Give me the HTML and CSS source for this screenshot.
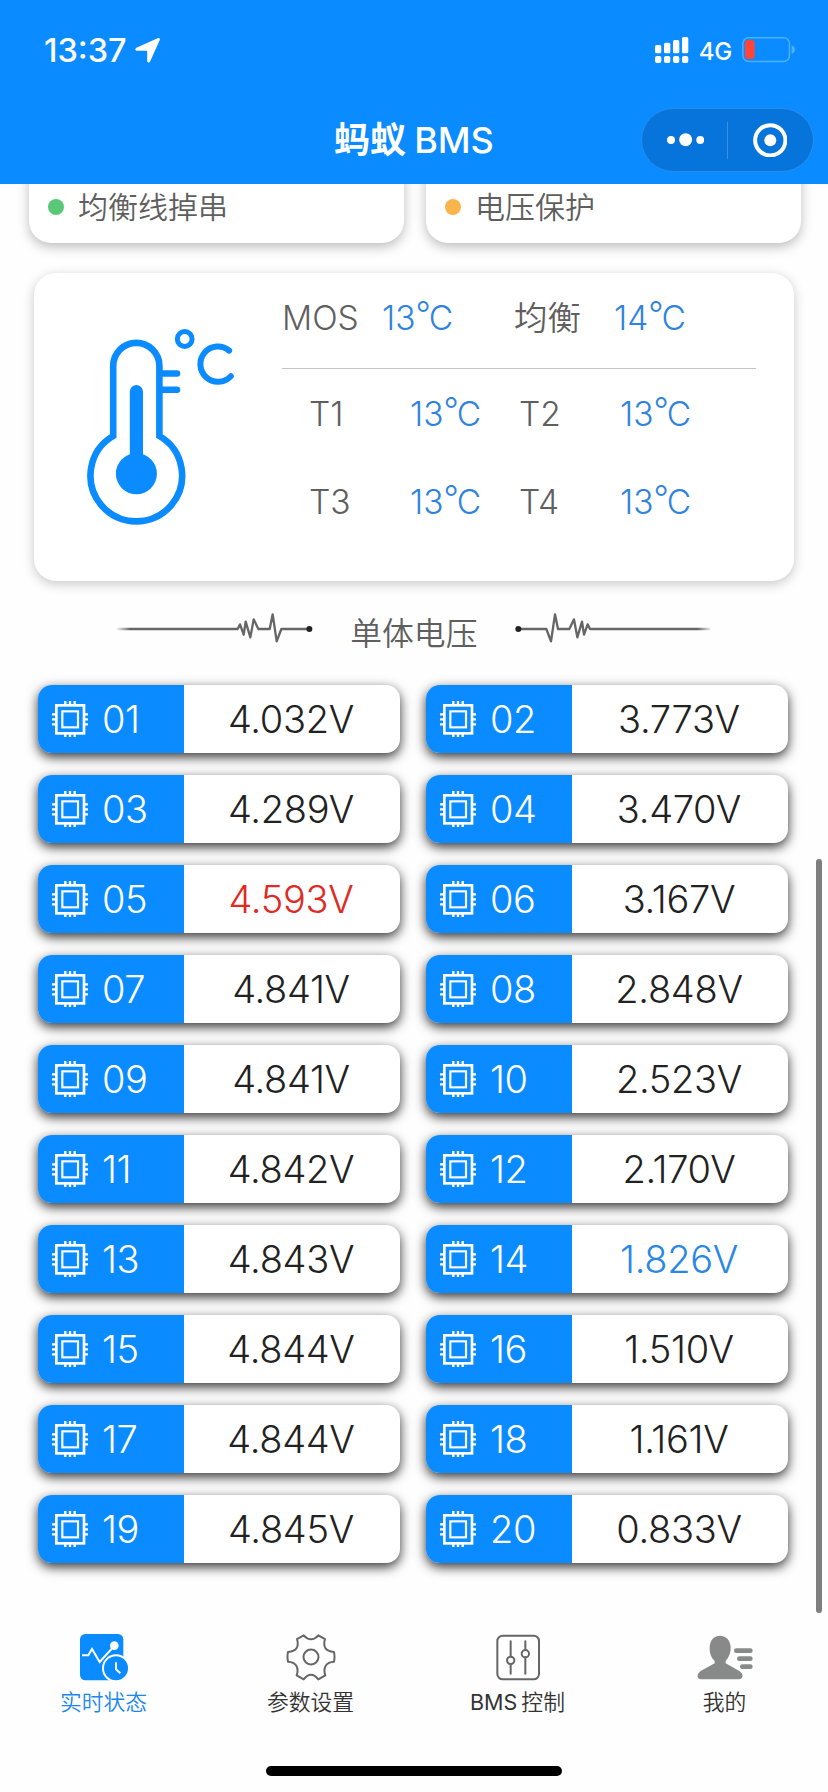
FILE: index.html
```html
<!DOCTYPE html>
<html lang="zh-CN">
<head>
<meta charset="utf-8">
<title>蚂蚁 BMS</title>
<link rel="stylesheet" href="styles.css">
</head>
<body>
<svg class="defs" width="0" height="0">
  <defs>
    <symbol id="chip" viewBox="0 0 108 110">
      <g fill="none" stroke="#fff">
        <rect x="13" y="13" width="83" height="84" stroke-width="8"/>
        <rect x="31" y="31" width="47" height="48" stroke-width="6.5"/>
        <path stroke-width="7" d="M40 0v12M54 0v12M68 0v12M40 98v12M54 98v12M68 98v12M0 40h12M0 55h12M0 70h12M96 40h12M96 55h12M96 70h12"/>
      </g>
    </symbol>
    <linearGradient id="fade" gradientUnits="userSpaceOnUse" x1="50" y1="0" x2="90" y2="0">
      <stop offset="0" stop-color="#666" stop-opacity="0.1"/>
      <stop offset="1" stop-color="#666"/>
    </linearGradient>
    <symbol id="pulse" viewBox="50 60 590 104">
      <path fill="none" stroke="url(#fade)" stroke-width="7" stroke-linejoin="round" d="M50 117H412L419 103L430 134L436 95L450 142L460 88L474 117H508L517 73L529 154L543 117H627"/>
      <circle cx="627" cy="117" r="9" fill="#222"/>
    </symbol>
  </defs>
</svg>

<header class="header">
  <div class="status">
    <span class="time">13:37</span>
    <svg class="location" viewBox="0 0 74 74"><path fill="#fff" d="M67 1Q75-2 73 7L45 69Q41 77 36 69V38H5Q-3 35 4 29Z"/></svg>
    <svg class="signal" viewBox="0 0 100 78" fill="#fff">
      <rect x="0" y="24" width="19" height="25" rx="5"/><rect x="27" y="17" width="19" height="32" rx="5"/><rect x="54" y="9" width="19" height="40" rx="5"/><rect x="81" y="0" width="19" height="49" rx="5"/>
      <rect x="0" y="57" width="19" height="21" rx="6"/><rect x="27" y="57" width="19" height="21" rx="6"/><rect x="54" y="57" width="19" height="21" rx="6"/><rect x="81" y="57" width="19" height="21" rx="6"/>
    </svg>
    <span class="network">4G</span>
    <svg class="battery" viewBox="0 0 160 76">
      <rect x="2.5" y="2.5" width="140" height="71" rx="17" fill="none" stroke="#4fb0ff" stroke-width="4.5"/>
      <rect x="9" y="9" width="29" height="57" rx="9" fill="#ff453a"/>
      <path d="M149 25Q159 29 159 38Q159 47 149 51Z" fill="#4fb0ff"/>
    </svg>
  </div>
  <div class="navbar">
    <h1 class="title">蚂蚁<span class="title-latin">BMS</span></h1>
    <div class="capsule">
      <svg class="more" viewBox="0 0 112 40" fill="#fff"><circle cx="12" cy="21" r="12"/><circle cx="56" cy="20" r="19.5"/><circle cx="100" cy="21" r="12"/></svg>
      <i class="capsule-line"></i>
      <svg class="target" viewBox="0 0 104 104"><circle cx="52" cy="52" r="45.5" fill="none" stroke="#fff" stroke-width="12"/><circle cx="52" cy="52" r="18" fill="#fff"/></svg>
    </div>
  </div>
</header>

<main class="content">
  <section class="alerts">
    <div class="alert"><i class="dot green"></i>均衡线掉串</div>
    <div class="alert"><i class="dot orange"></i>电压保护</div>
  </section>

  <section class="temperature">
    <svg class="thermometer" viewBox="84 325 154 202">
      <g fill="none" stroke="#0a8bff" stroke-width="6.6">
        <path d="M113.2 436V366A23.1 23.1 0 0 1 159.4 366V436A45.8 45.8 0 1 1 113.2 436Z"/>
        <path stroke-linecap="round" d="M162 373.5H177M162 389.8H177"/>
        <path stroke-width="6" stroke-linecap="round" d="M229.2 350.6A17.6 17.6 0 1 0 230.8 376.2"/>
        <circle cx="184.7" cy="339" r="7.4" stroke-width="5"/>
        <path stroke-width="13.2" stroke-linecap="round" d="M136.4 391.7V474"/>
      </g>
      <circle cx="136.4" cy="473.7" r="20.5" fill="#0a8bff"/>
    </svg>
    <div class="readings">
      <div class="row main-row"><span class="label">MOS</span><span class="value">13<i class="deg">°</i>C</span><span class="label cjk">均衡</span><span class="value">14<i class="deg">°</i>C</span></div>
      <div class="row probe-row"><span class="label">T1</span><span class="value">13<i class="deg">°</i>C</span><span class="label">T2</span><span class="value">13<i class="deg">°</i>C</span></div>
      <div class="row probe-row"><span class="label">T3</span><span class="value">13<i class="deg">°</i>C</span><span class="label">T4</span><span class="value">13<i class="deg">°</i>C</span></div>
    </div>
  </section>

  <div class="section-title">
    <svg class="pulse"><use href="#pulse"/></svg>
    <h2 class="section-name">单体电压</h2>
    <svg class="pulse mirrored"><use href="#pulse"/></svg>
  </div>

  <section class="cells">
    <div class="cell"><div class="tag"><svg class="chip"><use href="#chip"/></svg>01</div><div class="volt">4.032V</div></div>
    <div class="cell"><div class="tag"><svg class="chip"><use href="#chip"/></svg>02</div><div class="volt">3.773V</div></div>
    <div class="cell"><div class="tag"><svg class="chip"><use href="#chip"/></svg>03</div><div class="volt">4.289V</div></div>
    <div class="cell"><div class="tag"><svg class="chip"><use href="#chip"/></svg>04</div><div class="volt">3.470V</div></div>
    <div class="cell"><div class="tag"><svg class="chip"><use href="#chip"/></svg>05</div><div class="volt high">4.593V</div></div>
    <div class="cell"><div class="tag"><svg class="chip"><use href="#chip"/></svg>06</div><div class="volt">3.167V</div></div>
    <div class="cell"><div class="tag"><svg class="chip"><use href="#chip"/></svg>07</div><div class="volt">4.841V</div></div>
    <div class="cell"><div class="tag"><svg class="chip"><use href="#chip"/></svg>08</div><div class="volt">2.848V</div></div>
    <div class="cell"><div class="tag"><svg class="chip"><use href="#chip"/></svg>09</div><div class="volt">4.841V</div></div>
    <div class="cell"><div class="tag"><svg class="chip"><use href="#chip"/></svg>10</div><div class="volt">2.523V</div></div>
    <div class="cell"><div class="tag"><svg class="chip"><use href="#chip"/></svg>11</div><div class="volt">4.842V</div></div>
    <div class="cell"><div class="tag"><svg class="chip"><use href="#chip"/></svg>12</div><div class="volt">2.170V</div></div>
    <div class="cell"><div class="tag"><svg class="chip"><use href="#chip"/></svg>13</div><div class="volt">4.843V</div></div>
    <div class="cell"><div class="tag"><svg class="chip"><use href="#chip"/></svg>14</div><div class="volt low">1.826V</div></div>
    <div class="cell"><div class="tag"><svg class="chip"><use href="#chip"/></svg>15</div><div class="volt">4.844V</div></div>
    <div class="cell"><div class="tag"><svg class="chip"><use href="#chip"/></svg>16</div><div class="volt">1.510V</div></div>
    <div class="cell"><div class="tag"><svg class="chip"><use href="#chip"/></svg>17</div><div class="volt">4.844V</div></div>
    <div class="cell"><div class="tag"><svg class="chip"><use href="#chip"/></svg>18</div><div class="volt">1.161V</div></div>
    <div class="cell"><div class="tag"><svg class="chip"><use href="#chip"/></svg>19</div><div class="volt">4.845V</div></div>
    <div class="cell"><div class="tag"><svg class="chip"><use href="#chip"/></svg>20</div><div class="volt">0.833V</div></div>
  </section>
</main>

<nav class="tabs">
  <a class="tab active">
    <svg class="tab-icon" viewBox="0 0 150 140">
      <rect x="3" y="0" width="130" height="139" rx="16" fill="#0a8bff"/>
      <path d="M9 64H28L39 45L62 84L104 38" fill="none" stroke="#fff" stroke-width="6"/>
      <circle cx="106" cy="35" r="13" fill="#fff"/>
      <circle cx="111" cy="103" r="42" fill="#fff"/>
      <circle cx="111" cy="103" r="36" fill="#0a8bff"/>
      <path d="M111 85V106L124 118" fill="none" stroke="#fff" stroke-width="6"/>
    </svg>
    <span>实时状态</span>
  </a>
  <a class="tab">
    <svg class="tab-icon" viewBox="0 0 150 140">
      <g fill="none" stroke="#666" stroke-width="6" stroke-linejoin="round">
        <path d="M53 4Q64 16 75 16Q86 16 97 4L117 15Q112 32 118 42Q124 52 144 54Q147 69 144 83Q126 84 119 95Q112 107 118 124L97 136Q86 122 75 122Q64 122 53 136L32 124Q38 107 31 95Q24 84 6 83Q3 69 6 54Q26 52 32 42Q38 32 33 15Z"/>
        <circle cx="75" cy="69" r="22.5"/>
      </g>
    </svg>
    <span>参数设置</span>
  </a>
  <a class="tab">
    <svg class="tab-icon" viewBox="0 0 150 140">
      <g fill="none" stroke="#666" stroke-width="6" stroke-linecap="round">
        <rect x="13" y="5" width="125" height="131" rx="16"/>
        <path d="M53 22V67M53 90V119M97 22V47M97 70V119"/>
        <circle cx="53" cy="79" r="11"/><circle cx="97" cy="59" r="11"/>
      </g>
    </svg>
    <span><b class="tab-latin">BMS</b>控制</span>
  </a>
  <a class="tab">
    <svg class="tab-icon wide" viewBox="0 0 168 140">
      <g fill="#888a89">
        <path d="M69 5C88 5 102 21 101 44C100 62 92 75 86 80V88L127 111Q139 119 136 129Q134 136 126 136H12Q4 136 2 129Q0 119 11 111L53 88V80C46 75 38 62 38 44C37 21 50 5 69 5Z"/>
        <rect x="111" y="43" width="56" height="14" rx="7"/><rect x="120" y="67" width="47" height="14" rx="7"/><rect x="129" y="91" width="38" height="14" rx="7"/>
      </g>
    </svg>
    <span>我的</span>
  </a>
</nav>
<div class="home-bar"></div>
<div class="scroll-thumb"></div>
</body>
</html>
```
FILE: styles.css
```css
* { box-sizing: border-box; }

body {
  position: relative;
  width: 828px;
  height: 1792px;
  margin: 0;
  overflow: hidden;
  display: flex;
  flex-direction: column;
  background: #fefefe;
  color: #5f5f5f;
  font-family: Inter, "Noto Sans CJK SC", sans-serif;
  font-weight: 300;
}
svg { display: block; flex: none; }
.defs { position: absolute; }

.header { flex: none; height: 184px; background: #0a8bff; color: #fff; }
.status { display: flex; align-items: center; height: 100px; padding: 0 33px 0 44px; }
.time { width: 91px; font-size: 32.5px; font-weight: 550; }
.location { width: 25px; height: 25px; }
.signal { width: 33.3px; height: 26px; margin-left: auto; }
.network { width: 53px; padding: 2px 0 0 10px; font-size: 24px; font-weight: 450; letter-spacing: -0.3px; }
.battery { width: 53.3px; height: 25.3px; }

.navbar { display: grid; grid-template-columns: 1fr auto 1fr; align-items: center; height: 80px; padding-right: 14.5px; }
.title { grid-column: 2; margin: 0; padding-left: 14.5px; display: flex; align-items: center; font-size: 36px; line-height: 50px; font-weight: 600; }
.title-latin { margin-left: 8px; font-weight: 550; }
.capsule {
  justify-self: end;
  display: flex;
  align-items: center;
  width: 173px;
  height: 64px;
  padding-left: 25px;
  border: 1px solid #278fec;
  border-radius: 32px;
  background: #0674da;
}
.more { width: 37.3px; height: 13.3px; }
.capsule-line { width: 1px; height: 37px; margin: 0 25px 0 23px; background: #3a91e3; }
.target { width: 34.6px; height: 34.6px; }

.content { flex: none; height: 1416px; overflow: hidden; }
.alerts { display: flex; gap: 22px; margin-top: -40px; padding-left: 29px; }
.alert {
  display: flex;
  align-items: center;
  width: 375px;
  height: 99px;
  padding: 22px 0 0 19px;
  border-radius: 22px;
  background: #fff;
  box-shadow: 0 4px 12px rgba(0, 0, 0, 0.26);
  font-size: 30px;
  font-weight: 350;
}
.dot { width: 16px; height: 16px; margin: 4px 14px 0 0; border-radius: 50%; }
.green { background: #5ac878; }
.orange { background: #f9b54c; }

.temperature {
  display: flex;
  width: 760px;
  height: 308px;
  margin: 30px 0 0 34px;
  padding-left: 50px;
  border-radius: 22px;
  background: #fff;
  box-shadow: 0 3px 12px rgba(0, 0, 0, 0.22);
}
.thermometer { width: 154px; height: 202px; margin-top: 52px; }
.readings { width: 474px; margin-left: 44px; font-size: 33.5px; line-height: 40px; }
.row { display: grid; align-items: center; white-space: nowrap; }
.main-row { grid-template-columns: 100px 132px 100px 1fr; height: 96px; padding-bottom: 5px; border-bottom: 1px solid #c4c4c4; }
.probe-row { grid-template-columns: 101px 109px 101px 1fr; height: 88px; padding: 2px 0 0 27px; }
.cjk { font-weight: 350; }
.value { color: #2f83e0; }
.deg { display: inline-block; margin-right: -1px; transform: translateY(-4px); font-style: normal; letter-spacing: -1px; }

.section-title { display: flex; align-items: center; height: 104px; padding-left: 116.7px; }
.pulse { width: 196.7px; height: 34.7px; margin-top: -12px; }
.mirrored { transform: scaleX(-1); }
.section-name { width: 201px; margin: -4px 0 0; text-align: center; font-size: 31.8px; font-weight: 350; }

.cells { display: grid; grid-template-columns: 362px 362px; grid-auto-rows: 68px; gap: 22px 26px; padding-left: 38px; }
.cell {
  display: flex;
  overflow: hidden;
  border-radius: 14px;
  background: #fff;
  box-shadow: 0 4px 12px rgba(0, 0, 0, 0.8);
  font-size: 38px;
  line-height: 69px;
}
.tag { display: flex; align-items: center; width: 146px; padding-left: 14px; background: #0a8bff; color: #fff; letter-spacing: -0.4px; }
.chip { width: 36px; height: 36.7px; margin-right: 14px; }
.volt { flex: 1; padding-right: 2px; text-align: center; color: #222; letter-spacing: -0.3px; }
.high { color: #e02a24; }
.low { color: #2a87e6; }

.tabs { display: grid; grid-template-columns: repeat(4, 1fr); height: 166px; padding-top: 34px; }
.tab { display: flex; flex-direction: column; align-items: center; gap: 5px; color: #333; font-size: 21.8px; line-height: 32px; font-weight: 350; }
.active { color: #1c88ec; }
.tab-icon { width: 50px; height: 46.7px; }
.wide { width: 56px; }
.tab-latin { margin-right: 4px; font-size: 21.5px; font-weight: 400; }
.home-bar { width: 296px; height: 10px; margin: 0 auto; border-radius: 5px; background: #000; }
.scroll-thumb { position: absolute; left: 816px; top: 859px; width: 6px; height: 754px; border-radius: 3px; background: #7f7f7f; }
```
